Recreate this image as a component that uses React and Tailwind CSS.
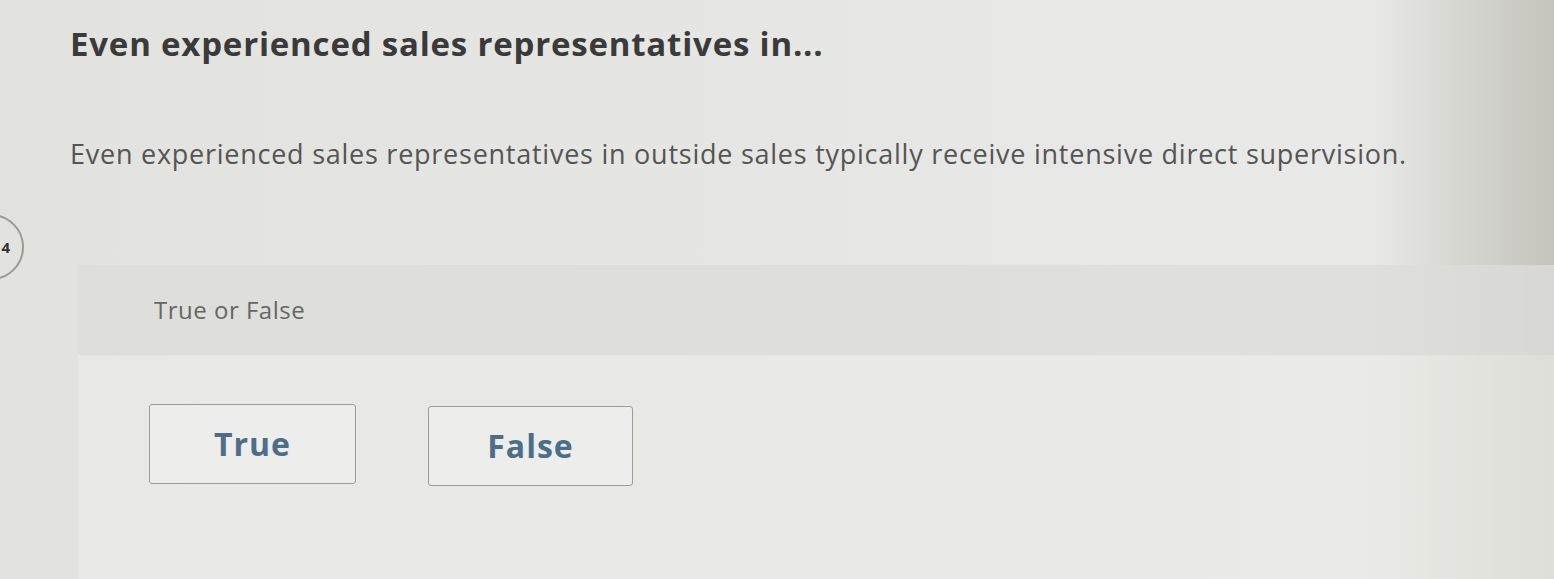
import React from 'react'

function App() {
  return (
    <div
      className="relative h-[579px] w-[1554px] overflow-hidden bg-linear-to-r from-[#e2e2df] via-[#e9e9e7] via-88% to-[#c4c4bc] text-[#333]"
      style={{ fontFamily: '"Open Sans", Lato, sans-serif' }}
    >
      {/* question number, cut at the left edge */}
      <div className="absolute left-[-42px] top-[214px] flex h-[66px] w-[66px] items-center justify-end rounded-full border-2 border-[#9a9a96] pr-[12px] text-[15px] font-bold text-[#333]">
        4
      </div>

      <div className="pl-[70px] pt-[20px]">
        <h1 className="text-[33px] font-bold leading-[48px] tracking-[0.8px] text-[#3a3a3a]">
          Even experienced sales representatives in...
        </h1>
        <p className="mt-[67px] text-[27px] leading-[38px] tracking-[0.75px] text-[#555]">
          Even experienced sales representatives in outside sales typically receive intensive direct supervision.
        </p>
      </div>

      <div className="ml-[78px] mt-[92px]">
        <div className="flex h-[90px] items-center bg-[#dcdcd9]/80 pl-[76px]">
          <span className="text-[24px] tracking-[0.5px] text-[#666]">True or False</span>
        </div>
        <div className="flex h-[230px] gap-[72px] bg-[#e9e9e6]/70 pl-[71px] pt-[49px]">
          <button className="flex h-[80px] w-[207px] items-center justify-center rounded-[3px] border border-[#9c9c9a] bg-[#ededeb] text-[32px] font-bold tracking-[1px] text-[#4d6e88]">
            True
          </button>
          <button className="mt-[2px] flex h-[80px] w-[205px] items-center justify-center rounded-[3px] border border-[#9c9c9a] bg-[#ededeb] text-[32px] font-bold tracking-[1px] text-[#4d6e88]">
            False
          </button>
        </div>
      </div>
    </div>
  )
}

export default App
